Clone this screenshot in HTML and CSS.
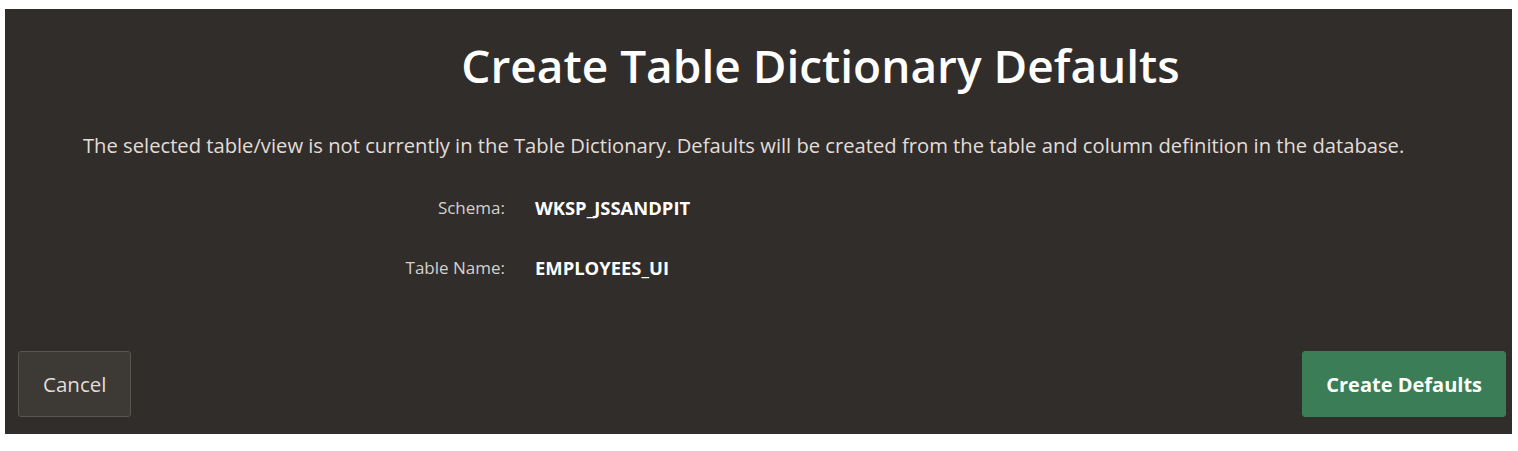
FILE: index.html
```html
<!DOCTYPE html>
<html lang="en">
<head>
    <meta charset="UTF-8">
    <title>Create Table Dictionary Defaults</title>
    <link rel="stylesheet" href="styles.css">
</head>
<body>

    <div class="dialog">
        <!-- Heading -->
        <h1 class="dialog-title">Create Table Dictionary Defaults</h1>

        <p class="dialog-text">The selected table/view is not currently in the Table Dictionary. Defaults will be created from the table and column definition in the database.</p>

        <!-- Read only fields -->
        <div class="fields">
            <div class="field-label">Schema:</div>
            <div class="field-value">WKSP_JSSANDPIT</div>
            <div class="field-label">Table Name:</div>
            <div class="field-value">EMPLOYEES_UI</div>
        </div>

        <!-- Button bar -->
        <div class="buttons">
            <button class="btn">Cancel</button>
            <button class="btn btn-hot">Create Defaults</button>
        </div>
    </div>

</body>
</html>
```

FILE: styles.css
```css
* {
    margin: 0;
    padding: 0;
    box-sizing: border-box;
}

body {
    background-color: #ffffff;
    font-family: 'Open Sans', 'Noto Sans', sans-serif;
    padding: 9px 6px 17px 5px;
}

.dialog {
    background-color: #312d2a;
    height: 425px;
    display: flex;
    flex-direction: column;
    color: #e2ddd8;
}

.dialog-title {
    color: #ffffff;
    font-size: 46px;
    font-weight: 600;
    text-align: center;
    padding-left: 124px;
    margin-top: 25px;
    line-height: 62px;
}

.dialog-text {
    font-size: 20.2px;
    padding-left: 78px;
    margin-top: 35px;
    line-height: 28px;
    white-space: nowrap;
}

.fields {
    display: grid;
    grid-template-columns: 500px auto;
    column-gap: 30px;
    row-gap: 36px;
    margin-top: 37px;
    line-height: 24px;
}

.field-label {
    text-align: right;
    font-size: 17px;
    color: #d6d1cc;
}

.field-value {
    color: #ffffff;
    font-size: 18.4px;
    font-weight: 700;
}

.buttons {
    margin-top: auto;
    display: flex;
    justify-content: space-between;
    padding: 0 6px 17px 13px;
}

.btn {
    height: 66px;
    padding: 0 24px;
    font-family: inherit;
    font-size: 20.5px;
    color: #e2ddd8;
    background-color: #3d3935;
    border: 1px solid #59544f;
    border-radius: 3px;
    cursor: pointer;
}

.btn-hot {
    background-color: #3a7d56;
    border-color: #3a7d56;
    color: #ffffff;
    font-size: 20px;
    font-weight: 700;
    padding: 0 23px;
}
```
